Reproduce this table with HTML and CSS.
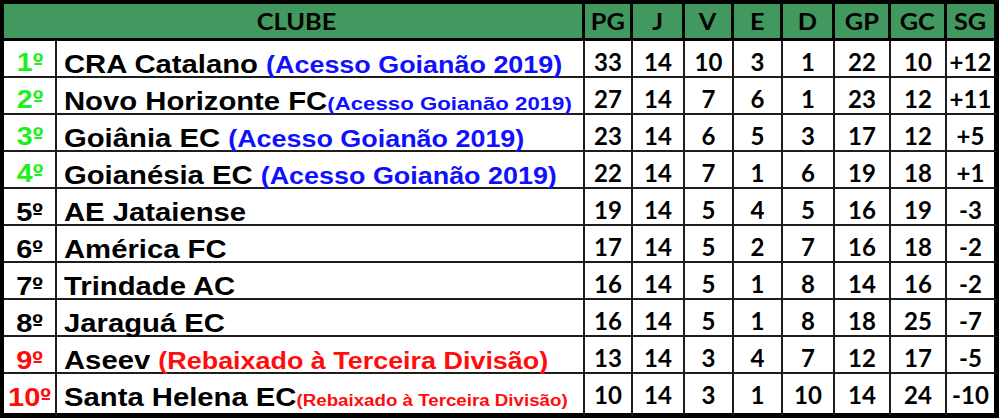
FILE: index.html
```html
<!DOCTYPE html>
<html lang="pt">
<head>
<meta charset="utf-8">
<title>Classificação</title>
<link rel="stylesheet" href="styles.css">
</head>
<body>
<div class="table">
  <div class="h club-h"><span class="ht">CLUBE</span></div>
  <div class="h"><span class="ht">PG</span></div>
  <div class="h"><span class="ht">J</span></div>
  <div class="h"><span class="ht">V</span></div>
  <div class="h"><span class="ht">E</span></div>
  <div class="h"><span class="ht">D</span></div>
  <div class="h"><span class="ht">GP</span></div>
  <div class="h"><span class="ht">GC</span></div>
  <div class="h last"><span class="ht">SG</span></div>

  <div class="pos up"><span class="pt">1<span class="ord">º</span></span></div><div class="name"><span class="txt">CRA Catalano <span class="blue">(Acesso Goianão 2019)</span></span></div>
  <div class="n">33</div><div class="n">14</div><div class="n">10</div><div class="n">3</div><div class="n">1</div><div class="n">22</div><div class="n">10</div><div class="n last">+12</div>

  <div class="pos up"><span class="pt">2<span class="ord">º</span></span></div><div class="name"><span class="txt">Novo Horizonte FC<span class="blue small">(Acesso Goianão 2019)</span></span></div>
  <div class="n">27</div><div class="n">14</div><div class="n">7</div><div class="n">6</div><div class="n">1</div><div class="n">23</div><div class="n">12</div><div class="n last">+11</div>

  <div class="pos up"><span class="pt">3<span class="ord">º</span></span></div><div class="name"><span class="txt">Goiânia EC <span class="blue">(Acesso Goianão 2019)</span></span></div>
  <div class="n">23</div><div class="n">14</div><div class="n">6</div><div class="n">5</div><div class="n">3</div><div class="n">17</div><div class="n">12</div><div class="n last">+5</div>

  <div class="pos up"><span class="pt">4<span class="ord">º</span></span></div><div class="name"><span class="txt">Goianésia EC <span class="blue">(Acesso Goianão 2019)</span></span></div>
  <div class="n">22</div><div class="n">14</div><div class="n">7</div><div class="n">1</div><div class="n">6</div><div class="n">19</div><div class="n">18</div><div class="n last">+1</div>

  <div class="pos"><span class="pt">5<span class="ord">º</span></span></div><div class="name"><span class="txt">AE Jataiense</span></div>
  <div class="n">19</div><div class="n">14</div><div class="n">5</div><div class="n">4</div><div class="n">5</div><div class="n">16</div><div class="n">19</div><div class="n last">-3</div>

  <div class="pos"><span class="pt">6<span class="ord">º</span></span></div><div class="name"><span class="txt">América FC</span></div>
  <div class="n">17</div><div class="n">14</div><div class="n">5</div><div class="n">2</div><div class="n">7</div><div class="n">16</div><div class="n">18</div><div class="n last">-2</div>

  <div class="pos"><span class="pt">7<span class="ord">º</span></span></div><div class="name"><span class="txt">Trindade AC</span></div>
  <div class="n">16</div><div class="n">14</div><div class="n">5</div><div class="n">1</div><div class="n">8</div><div class="n">14</div><div class="n">16</div><div class="n last">-2</div>

  <div class="pos"><span class="pt">8<span class="ord">º</span></span></div><div class="name"><span class="txt">Jaraguá EC</span></div>
  <div class="n">16</div><div class="n">14</div><div class="n">5</div><div class="n">1</div><div class="n">8</div><div class="n">18</div><div class="n">25</div><div class="n last">-7</div>

  <div class="pos down"><span class="pt">9<span class="ord">º</span></span></div><div class="name"><span class="txt">Aseev <span class="red">(Rebaixado à Terceira Divisão)</span></span></div>
  <div class="n">13</div><div class="n">14</div><div class="n">3</div><div class="n">4</div><div class="n">7</div><div class="n">12</div><div class="n">17</div><div class="n last">-5</div>

  <div class="pos down bottom"><span class="pt">10<span class="ord">º</span></span></div><div class="name bottom"><span class="txt">Santa Helena EC<span class="red smaller">(Rebaixado à Terceira Divisão)</span></span></div>
  <div class="n bottom">10</div><div class="n bottom">14</div><div class="n bottom">3</div><div class="n bottom">1</div><div class="n bottom">10</div><div class="n bottom">14</div><div class="n bottom">24</div><div class="n last bottom">-10</div>
</div>
</body>
</html>
```

FILE: styles.css
```css
* { box-sizing: border-box; }
html, body { margin: 0; padding: 0; background: #ffffff; }

.table {
  display: grid;
  grid-template-columns: 53px 528px 48px 52px 49px 49px 52px 56px 56px 52px;
  grid-template-rows: 37px repeat(9, 37px) 44px;
  width: 999px;
  border-left: 4px solid #000;
  border-top: 4px solid #000;
}

.h {
  background: #41995f;
  border-right: 3px solid #000;
  border-bottom: 3px solid #000;
  font-family: Lato, "Open Sans", sans-serif;
  font-weight: 700;
  font-size: 22px;
  color: #000;
  display: flex;
  align-items: center;
  justify-content: center;
  padding-top: 1px;
}
.ht { display: inline-block; transform: scaleX(1.15); }
.club-h { grid-column: span 2; padding-left: 8px; }

.pos, .name, .n {
  border-right: 2px solid #1e1e1e;
  border-bottom: 2px solid #1e1e1e;
  white-space: nowrap;
  line-height: 35px;
}

.pos {
  text-align: center;
  font-family: "Liberation Sans", Arial, sans-serif;
  font-weight: 700;
  font-size: 25px;
  color: #000;
  padding-top: 6px;
}
.pt { display: inline-block; transform: scaleX(1.16); }
.pos.up { color: #1ef01e; font-size: 26px; padding-top: 4px; }
.pos.up .pt { transform: scaleX(1.1); }
.pos.down { color: #ff0c0c; }

/* ordinal indicator with its underline bar, as in the Arial glyph */
.ord { position: relative; }
.ord::after {
  content: "";
  position: absolute;
  left: 0.04em;
  width: 0.3em;
  bottom: 0.46em;
  height: 0.07em;
  background: currentColor;
}

.name {
  font-family: "Liberation Sans", Arial, sans-serif;
  font-weight: 700;
  font-size: 25px;
  color: #000;
  padding-left: 7px;
  padding-top: 6px;
}
.txt {
  display: inline-block;
  transform: scaleX(1.17);
  transform-origin: 0 50%;
}
.blue { color: #1010ff; font-size: 23px; }
.red { color: #ff0c0c; font-size: 23px; }
.blue.small { font-size: 19px; }
.red.smaller { font-size: 16px; }

.n {
  text-align: center;
  font-family: Lato, "Open Sans", sans-serif;
  font-weight: 700;
  font-size: 24px;
  color: #000;
  padding-top: 3px;
}

.last { border-right: 5px solid #000; }
.h.last { border-right: 5px solid #000; }
.bottom { border-bottom: 5px solid #000; }
```
